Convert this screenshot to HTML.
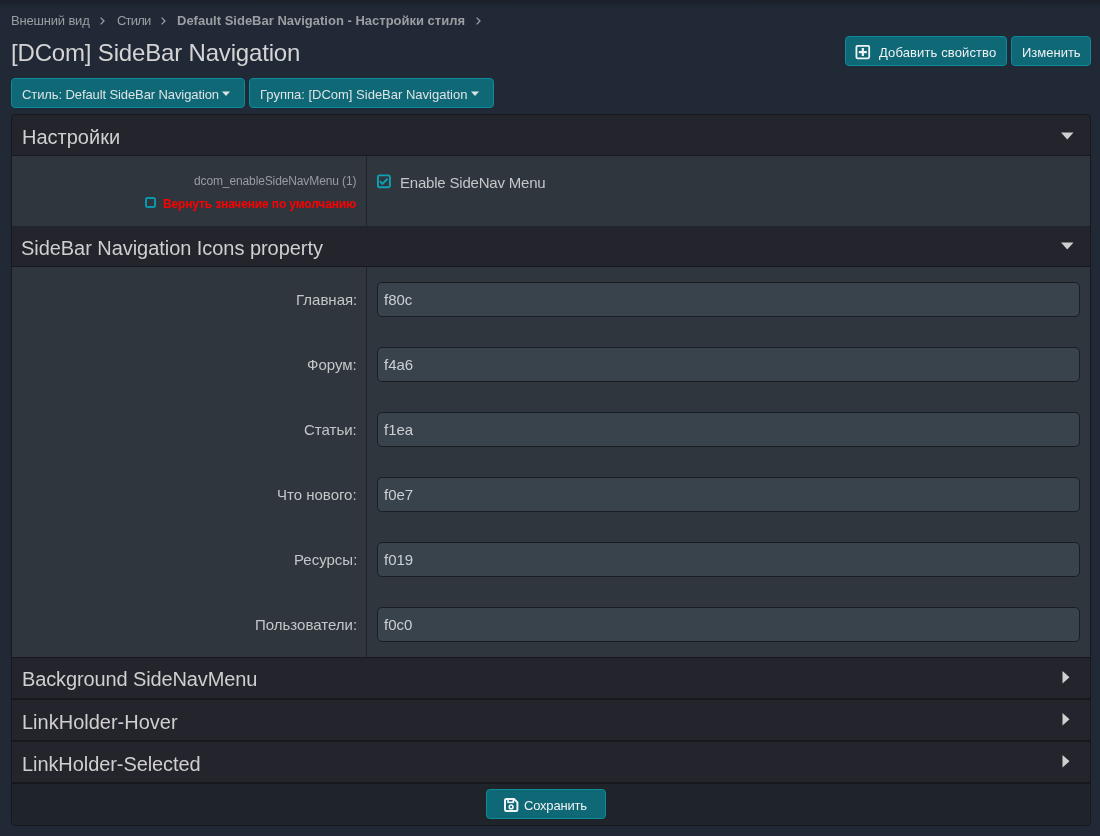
<!DOCTYPE html>
<html><head><meta charset="utf-8">
<style>
*{box-sizing:border-box;margin:0;padding:0}
html,body{width:1100px;height:836px;overflow:hidden}
body{background:#202935;font-family:"Liberation Sans",sans-serif;color:#c8c8c8;position:relative}
.t{position:absolute;white-space:nowrap;line-height:1;will-change:transform}
.crumb{font-size:13px;color:#9b9ea2}
.title{font-size:24px;color:#d4d4d4}
.btn{position:absolute;background:#0f6876;border:1px solid #0b8b9b;border-radius:4px}
.btxt{font-size:13px;color:#eef2f3}
.ftxt{font-size:13px;color:#dde3e5}
.hdr{position:absolute;left:12px;width:1078px;background:#23242c}
.line{position:absolute;left:12px;width:1078px;background:#17181d}
.row{position:absolute;left:12px;width:1078px;background:#2f363e}
.htxt{font-size:20px;color:#cfcfcf}
.lbl{font-size:15px;color:#c4c6c8}
.inp{position:absolute;left:377px;width:703px;height:35px;background:#39434c;border:1px solid #1a1d22;border-radius:5px}
.val{font-size:15px;color:#cdd0d2}
svg{position:absolute;overflow:visible}
</style></head><body>
<div style="position:absolute;left:0;top:0;width:1100px;height:9px;background:linear-gradient(#1b2029,#202935)"></div>
<!-- breadcrumb -->
<div class="t crumb" style="left:11px;top:14px;letter-spacing:-0.18px">Внешний вид</div>
<svg style="left:100px;top:17px" width="5" height="8"><polyline points="0.6,0.6 4,4 0.6,7.4" fill="none" stroke="#9b9ea2" stroke-width="1.3"/></svg>
<div class="t crumb" style="left:117px;top:14px;letter-spacing:-0.8px">Стили</div>
<svg style="left:161px;top:17px" width="5" height="8"><polyline points="0.6,0.6 4,4 0.6,7.4" fill="none" stroke="#9b9ea2" stroke-width="1.3"/></svg>
<div class="t crumb" style="left:177px;top:14px;font-weight:bold">Default SideBar Navigation - Настройки стиля</div>
<svg style="left:476px;top:17px" width="5" height="8"><polyline points="0.6,0.6 4,4 0.6,7.4" fill="none" stroke="#9b9ea2" stroke-width="1.3"/></svg>

<div class="t title" style="left:11px;top:41px;letter-spacing:-0.17px">[DCom] SideBar Navigation</div>

<!-- top buttons -->
<div class="btn" style="left:845px;top:36px;width:162px;height:30px"></div>
<svg style="left:855px;top:45px" width="15" height="15"><rect x="1.4" y="0.9" width="12.8" height="12.4" rx="1.2" fill="none" stroke="#f0f4f5" stroke-width="1.8"/><path d="M7.8 3.1v8M3.8 7.1h8" stroke="#f0f4f5" stroke-width="2.2"/></svg>
<div class="t btxt" style="left:879px;top:46px;letter-spacing:0.12px">Добавить свойство</div>
<div class="btn" style="left:1011px;top:36px;width:80px;height:30px"></div>
<div class="t btxt" style="left:1022px;top:46px">Изменить</div>

<!-- filter buttons -->
<div class="btn" style="left:11px;top:78px;width:234px;height:30px"></div>
<div class="t ftxt" style="left:22px;top:88px;letter-spacing:-0.1px">Стиль: Default SideBar Navigation</div>
<svg style="left:222px;top:91px" width="9" height="6"><path d="M0 0.5h8l-4 4.5z" fill="#dde3e5"/></svg>
<div class="btn" style="left:249px;top:78px;width:245px;height:30px"></div>
<div class="t ftxt" style="left:260px;top:88px">Группа: [DCom] SideBar Navigation</div>
<svg style="left:471px;top:91px" width="9" height="6"><path d="M0 0.5h8l-4 4.5z" fill="#dde3e5"/></svg>

<!-- block -->
<div style="position:absolute;left:11px;top:114px;width:1080px;height:712px;border:1px solid #17181d;border-radius:4px;background:#1f242b;overflow:hidden">
</div>
<div class="hdr" style="top:115px;height:40px;border-radius:3px 3px 0 0"></div>
<div class="line" style="top:155px;height:1px"></div>
<div class="t htxt" style="left:22px;top:127px">Настройки</div>
<svg style="left:1061px;top:132px" width="13" height="8"><path d="M0 0.5h12.5l-6.25 7z" fill="#cfcfcf"/></svg>

<div class="row" style="top:156px;height:70px"></div>
<div style="position:absolute;left:366px;top:156px;width:1px;height:70px;background:#1f2329"></div>
<div class="t" style="right:744px;top:175px;font-size:12px;color:#9a9c9f;letter-spacing:-0.12px">dcom_enableSideNavMenu (1)</div>
<svg style="left:145px;top:197px" width="11" height="11"><rect x="1" y="1" width="9" height="9" rx="1.5" fill="none" stroke="#0b97aa" stroke-width="2"/></svg>
<div class="t" style="right:744px;top:198px;font-size:12px;font-weight:bold;color:#ff0000;letter-spacing:-0.14px">Вернуть значение по умолчанию</div>
<svg style="left:377px;top:175px" width="14" height="14"><rect x="0.9" y="0.4" width="12" height="11.9" rx="1.5" fill="none" stroke="#0ea1b4" stroke-width="1.9"/><polyline points="3,6.2 5.4,8.9 10.6,3.8" fill="none" stroke="#0ea1b4" stroke-width="1.9"/></svg>
<div class="t lbl" style="left:400px;top:175px;letter-spacing:-0.2px">Enable SideNav Menu</div>

<div class="hdr" style="top:226px;height:40px"></div>
<div class="line" style="top:266px;height:1px"></div>
<div class="t htxt" style="left:21px;top:238px;letter-spacing:-0.05px">SideBar Navigation Icons property</div>
<svg style="left:1061px;top:242px" width="13" height="8"><path d="M0 0.5h12.5l-6.25 7z" fill="#cfcfcf"/></svg>

<div class="row" style="top:267px;height:390px"></div>
<div style="position:absolute;left:366px;top:267px;width:1px;height:390px;background:#1f2329"></div>

<div class="t lbl" style="right:743px;top:292px">Главная:</div>
<div class="inp" style="top:282px"></div>
<div class="t val" style="left:384px;top:292px">f80c</div>

<div class="t lbl" style="right:743px;top:357px">Форум:</div>
<div class="inp" style="top:347px"></div>
<div class="t val" style="left:384px;top:357px">f4a6</div>

<div class="t lbl" style="right:743px;top:422px">Статьи:</div>
<div class="inp" style="top:412px"></div>
<div class="t val" style="left:384px;top:422px">f1ea</div>

<div class="t lbl" style="right:743px;top:487px">Что нового:</div>
<div class="inp" style="top:477px"></div>
<div class="t val" style="left:384px;top:487px">f0e7</div>

<div class="t lbl" style="right:743px;top:552px">Ресурсы:</div>
<div class="inp" style="top:542px"></div>
<div class="t val" style="left:384px;top:552px">f019</div>

<div class="t lbl" style="right:743px;top:617px">Пользователи:</div>
<div class="inp" style="top:607px"></div>
<div class="t val" style="left:384px;top:617px">f0c0</div>

<div class="line" style="top:657px;height:1px"></div>
<div class="hdr" style="top:658px;height:40px"></div>
<div class="line" style="top:698px;height:2px"></div>
<div class="t htxt" style="left:22px;top:669px;letter-spacing:-0.12px">Background SideNavMenu</div>
<svg style="left:1062px;top:671px" width="9" height="13"><path d="M0.5 0v12.5l7-6.25z" fill="#cfcfcf"/></svg>

<div class="hdr" style="top:700px;height:40px"></div>
<div class="line" style="top:740px;height:2px"></div>
<div class="t htxt" style="left:22px;top:712px">LinkHolder-Hover</div>
<svg style="left:1062px;top:713px" width="9" height="13"><path d="M0.5 0v12.5l7-6.25z" fill="#cfcfcf"/></svg>

<div class="hdr" style="top:742px;height:40px"></div>
<div class="line" style="top:782px;height:2px"></div>
<div class="t htxt" style="left:22px;top:754px;letter-spacing:-0.08px">LinkHolder-Selected</div>
<svg style="left:1062px;top:755px" width="9" height="13"><path d="M0.5 0v12.5l7-6.25z" fill="#cfcfcf"/></svg>

<!-- save -->
<div class="btn" style="left:486px;top:789px;width:120px;height:30px"></div>
<svg style="left:504px;top:798px" width="15" height="14"><path d="M2.2 1H10L13.4 4.4V11.8Q13.4 13 12.2 13H2.2Q1 13 1 11.8V2.2Q1 1 2.2 1z" fill="none" stroke="#f0f4f5" stroke-width="2"/><rect x="4" y="1" width="5.3" height="3.3" fill="none" stroke="#f0f4f5" stroke-width="1.6"/><circle cx="7.1" cy="8.9" r="1.9" fill="none" stroke="#f0f4f5" stroke-width="1.6"/></svg>
<div class="t btxt" style="left:524px;top:799px;letter-spacing:-0.2px">Сохранить</div>
</body></html>
